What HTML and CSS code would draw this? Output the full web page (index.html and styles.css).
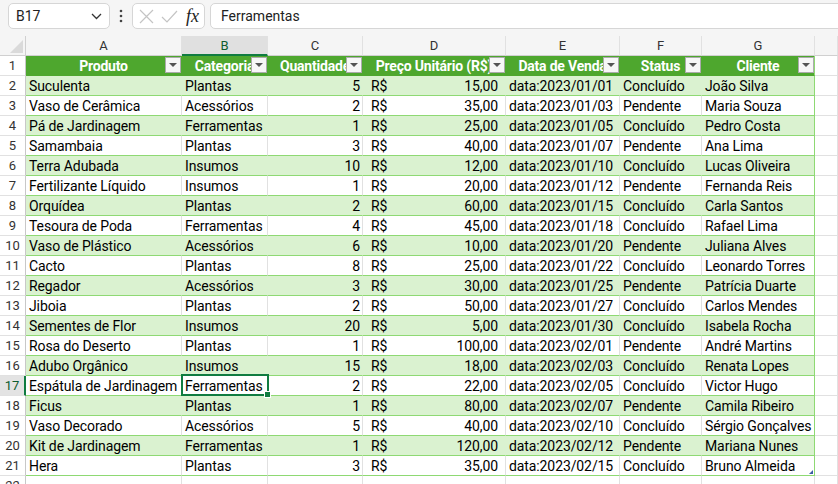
FILE: index.html
```html
<!DOCTYPE html>
<html lang="pt-BR">
<head>
    <meta charset="UTF-8">
    <meta name="viewport" content="width=device-width, initial-scale=1.0">
    <title>Vendas - Jardinagem</title>
    <link rel="stylesheet" href="styles.css">
</head>
<body>

    <div class="formula-bar">
        <div class="name-box">
            <span>B17</span>
            <svg width="11" height="7" viewBox="0 0 11 7"><path d="M1 1l4.5 4.5L10 1" fill="none" stroke="#333" stroke-width="1.3"/></svg>
        </div>
        <svg class="more" width="4" height="14" viewBox="0 0 4 14"><circle cx="2" cy="2" r="1.3" fill="#444"/><circle cx="2" cy="7" r="1.3" fill="#444"/><circle cx="2" cy="12" r="1.3" fill="#444"/></svg>
        <div class="edit-box">
            <svg width="15" height="15" viewBox="0 0 15 15"><path d="M1 1l13 13M14 1L1 14" fill="none" stroke="#c4c4c4" stroke-width="1.2"/></svg>
            <svg width="17" height="13" viewBox="0 0 17 13"><path d="M1 7l5 5L16 1" fill="none" stroke="#c4c4c4" stroke-width="1.2"/></svg>
            <span class="fx">fx</span>
        </div>
        <div class="formula-input">Ferramentas</div>
    </div>

    <div class="sheet" id="sheet">
        <div class="row col-heads">
            <div class="corner"><span class="corner-tri"></span></div>
            <div class="ch">A</div>
            <div class="ch active">B</div>
            <div class="ch">C</div>
            <div class="ch">D</div>
            <div class="ch">E</div>
            <div class="ch">F</div>
            <div class="ch">G</div>
            <div class="ch"></div>
        </div>
    </div>

    <script>
        const headers = ['Produto', 'Categoria', 'Quantidade', 'Preço Unitário (R$)', 'Data de Venda', 'Status', 'Cliente'];

        const vendas = [
            ['Suculenta', 'Plantas', 5, '15,00', 'data:2023/01/01', 'Concluído', 'João Silva'],
            ['Vaso de Cerâmica', 'Acessórios', 2, '35,00', 'data:2023/01/03', 'Pendente', 'Maria Souza'],
            ['Pá de Jardinagem', 'Ferramentas', 1, '25,00', 'data:2023/01/05', 'Concluído', 'Pedro Costa'],
            ['Samambaia', 'Plantas', 3, '40,00', 'data:2023/01/07', 'Pendente', 'Ana Lima'],
            ['Terra Adubada', 'Insumos', 10, '12,00', 'data:2023/01/10', 'Concluído', 'Lucas Oliveira'],
            ['Fertilizante Líquido', 'Insumos', 1, '20,00', 'data:2023/01/12', 'Pendente', 'Fernanda Reis'],
            ['Orquídea', 'Plantas', 2, '60,00', 'data:2023/01/15', 'Concluído', 'Carla Santos'],
            ['Tesoura de Poda', 'Ferramentas', 4, '45,00', 'data:2023/01/18', 'Concluído', 'Rafael Lima'],
            ['Vaso de Plástico', 'Acessórios', 6, '10,00', 'data:2023/01/20', 'Pendente', 'Juliana Alves'],
            ['Cacto', 'Plantas', 8, '25,00', 'data:2023/01/22', 'Concluído', 'Leonardo Torres'],
            ['Regador', 'Acessórios', 3, '30,00', 'data:2023/01/25', 'Pendente', 'Patrícia Duarte'],
            ['Jiboia', 'Plantas', 2, '50,00', 'data:2023/01/27', 'Concluído', 'Carlos Mendes'],
            ['Sementes de Flor', 'Insumos', 20, '5,00', 'data:2023/01/30', 'Concluído', 'Isabela Rocha'],
            ['Rosa do Deserto', 'Plantas', 1, '100,00', 'data:2023/02/01', 'Pendente', 'André Martins'],
            ['Adubo Orgânico', 'Insumos', 15, '18,00', 'data:2023/02/03', 'Concluído', 'Renata Lopes'],
            ['Espátula de Jardinagem', 'Ferramentas', 2, '22,00', 'data:2023/02/05', 'Concluído', 'Victor Hugo'],
            ['Ficus', 'Plantas', 1, '80,00', 'data:2023/02/07', 'Pendente', 'Camila Ribeiro'],
            ['Vaso Decorado', 'Acessórios', 5, '40,00', 'data:2023/02/10', 'Concluído', 'Sérgio Gonçalves'],
            ['Kit de Jardinagem', 'Ferramentas', 1, '120,00', 'data:2023/02/12', 'Pendente', 'Mariana Nunes'],
            ['Hera', 'Plantas', 3, '35,00', 'data:2023/02/15', 'Concluído', 'Bruno Almeida']
        ];

        const sheet = document.getElementById('sheet');
        const selected = { row: 17, col: 1 }; // B17

        function makeRow(num, cls) {
            const row = document.createElement('div');
            row.className = 'row ' + (cls || '');
            const rh = document.createElement('div');
            rh.className = 'rh' + (num === selected.row ? ' active' : '');
            rh.textContent = num;
            row.appendChild(rh);
            return row;
        }

        function addCell(row, cls, html) {
            const cell = document.createElement('div');
            cell.className = 'cell ' + cls;
            cell.innerHTML = html;
            row.appendChild(cell);
            return cell;
        }

        // header row of the table
        const head = makeRow(1, 'table-head');
        headers.forEach(h => {
            addCell(head, 't', `<span class="head-text">${h}</span><span class="filter"></span>`);
        });
        addCell(head, 'blank', '');
        sheet.appendChild(head);

        // data rows, banded
        vendas.forEach((v, i) => {
            const num = i + 2;
            const row = makeRow(num, i % 2 === 0 ? 'band' : '');
            addCell(row, 't', v[0]);
            const cat = addCell(row, 't', v[1]);
            addCell(row, 't num', v[2]);
            addCell(row, 't money', `<span>R$</span><span>${v[3]}</span>`);
            addCell(row, 't', v[4]);
            addCell(row, 't', v[5]);
            const last = addCell(row, 't', v[6]);
            addCell(row, 'blank', '');

            if (num === selected.row) {
                cat.insertAdjacentHTML('beforeend', '<span class="selection"><span class="handle"></span></span>');
            }
            if (i === vendas.length - 1) {
                last.insertAdjacentHTML('beforeend', '<span class="resize"></span>');
            }
            sheet.appendChild(row);
        });

        // empty row below the table
        const after = makeRow(22);
        for (let c = 0; c < 8; c++) addCell(after, 'blank', '');
        sheet.appendChild(after);
    </script>
</body>
</html>
```

FILE: styles.css
```css
/* Spreadsheet view */
body {
    margin: 0;
    font-family: Roboto, 'Liberation Sans', sans-serif;
    font-size: 14px;
    color: #000;
    background: #fff;
    overflow: hidden;
    width: 838px;
    height: 484px;
}

/* Formula bar */
.formula-bar {
    display: flex;
    align-items: flex-start;
    height: 36px;
    box-sizing: border-box;
    padding: 3px 0 0 8px;
    background: #f5f5f5;
}

.name-box,
.edit-box,
.formula-input {
    height: 26px;
    box-sizing: border-box;
    background: #fff;
    border: 1px solid #d6d6d6;
    border-radius: 5px;
    display: flex;
    align-items: center;
}

.name-box {
    width: 102px;
    padding: 0 7px;
    justify-content: space-between;
    color: #222;
}

.more {
    margin: 6px 9px 0 9px;
}

.edit-box {
    width: 73px;
    padding: 0 3px 0 6px;
    gap: 7px;
}

.fx {
    font-family: 'Liberation Serif', serif;
    font-style: italic;
    font-size: 18px;
    color: #222;
    margin-left: 1px;
}

.formula-input {
    flex: 1;
    margin: 0 -8px 0 5px;
    padding-left: 10px;
    color: #222;
}

/* Grid */
.row {
    display: grid;
    grid-template-columns: 26px 156px 86px 95px 143px 114px 82px 113px 1fr;
    height: 20px;
}

.rh,
.ch,
.corner,
.cell {
    box-sizing: border-box;
    height: 20px;
    border-right: 1px solid #e1e1e1;
    border-bottom: 1px solid #e1e1e1;
    white-space: nowrap;
    overflow: hidden;
}

.corner {
    position: relative;
    background: #f5f5f5;
    border-bottom-color: #d0d0d0;
    border-right-color: #d0d0d0;
}

.corner-tri {
    position: absolute;
    right: 2px;
    bottom: 2px;
    width: 0;
    height: 0;
    border-left: 13px solid transparent;
    border-bottom: 13px solid #dadada;
}

.ch {
    background: #f5f5f5;
    border-bottom-color: #d0d0d0;
    color: #333;
    font-size: 13px;
    line-height: 19px;
    text-align: center;
}

.ch.active {
    background: #e0e0e0;
    border-bottom: 2px solid #107c41;
    color: #0e5c2f;
}

.rh {
    background: #fff;
    color: #333;
    font-size: 13px;
    line-height: 20px;
    text-align: center;
    border-right-color: #c8c8c8;
}

.rh.active {
    background: #e3e3e3;
    border-right: 2px solid #107c41;
    color: #0e5c2f;
}

.cell {
    line-height: 18px;
    padding: 1px 3px 0;
    position: relative;
    letter-spacing: -0.1px;
}

/* Table body */
.cell.t {
    border-bottom-color: #8ed973;
}

.cell.t:nth-child(8) {
    border-right-color: #8ed973;
}

.band .cell.t {
    background: #daf2d0;
}

.band .cell.t:not(:nth-child(8)) {
    border-right-color: #daf2d0;
}

.num {
    text-align: right;
    padding-right: 2px;
}

.money {
    display: flex;
    justify-content: space-between;
    padding: 1px 7px 0 8px;
}

/* Table header */
.table-head .cell.t {
    background: #4ea72e;
    border-bottom-color: #4ea72e;
    color: #fff;
    font-weight: 700;
    letter-spacing: -0.2px;
    display: flex;
    justify-content: center;
    padding: 1px 0 0;
}

.table-head .cell.t:not(:nth-child(8)) {
    border-right-color: #4ea72e;
}

.filter {
    position: absolute;
    right: 0;
    top: 1px;
    width: 16px;
    height: 16px;
    box-sizing: border-box;
    background: #f7f7f7;
    border: 1px solid #ababab;
}

.filter::after {
    content: '';
    position: absolute;
    left: 3px;
    top: 5px;
    border-left: 4px solid transparent;
    border-right: 4px solid transparent;
    border-top: 4px solid #555;
}

/* Active cell */
.selection {
    position: absolute;
    left: -1px;
    top: -2px;
    right: -2px;
    bottom: -1px;
    border: 2px solid #107c41;
    pointer-events: none;
}

.cell:has(.selection) {
    overflow: visible;
    z-index: 2;
}

.handle {
    position: absolute;
    right: -4px;
    bottom: -4px;
    width: 5px;
    height: 5px;
    background: #107c41;
    border: 1px solid #fff;
}

.resize {
    position: absolute;
    right: 1px;
    bottom: 1px;
    border-left: 4px solid transparent;
    border-bottom: 4px solid #3b5ba5;
}
```
